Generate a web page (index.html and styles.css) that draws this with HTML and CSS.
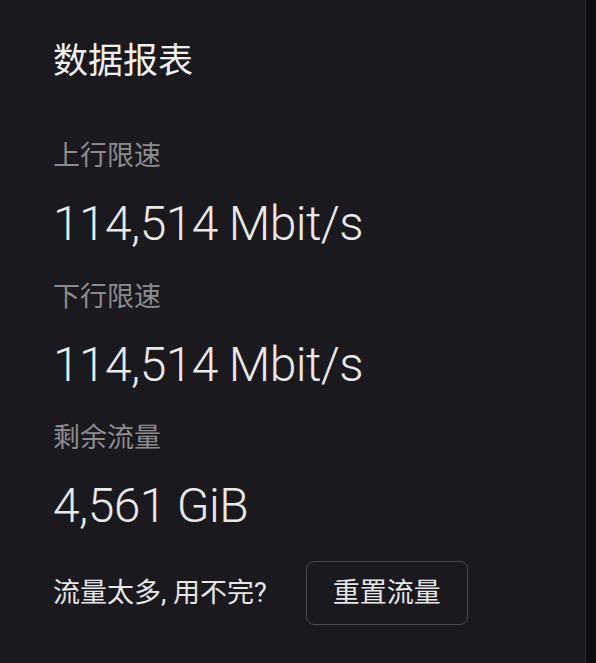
FILE: index.html
```html
<!DOCTYPE html>
<html lang="zh-CN">
<head>
<meta charset="utf-8">
<title>数据报表</title>
<link rel="stylesheet" href="styles.css">
</head>
<body>
  <section class="card">
    <h1 class="title">数据报表</h1>
    <div class="stat">
      <div class="label">上行限速</div>
      <div class="value">114,514 Mbit/s</div>
    </div>
    <div class="stat">
      <div class="label">下行限速</div>
      <div class="value">114,514 Mbit/s</div>
    </div>
    <div class="stat">
      <div class="label">剩余流量</div>
      <div class="value">4,561 GiB</div>
    </div>
    <div class="actions">
      <span class="hint">流量太多, 用不完?</span>
      <button class="btn" type="button">重置流量</button>
    </div>
  </section>
</body>
</html>
```
FILE: styles.css
```css
html, body {
  margin: 0;
  padding: 0;
  background: #0e0e11;
}
body {
  font-family: Roboto, "Noto Sans CJK SC", sans-serif;
  color: #e6e6e6;
}
.card {
  box-sizing: border-box;
  width: 586px;
  min-height: 663px;
  background: #1a191e;
  border-right: 1px solid #2e2d33;
  padding: 38px 0 0 53px;
}
.title {
  margin: 0;
  font-size: 35px;
  line-height: 48px;
  font-weight: 400;
  color: #f0f0f0;
}
.stat {
  display: flex;
  flex-direction: column;
  gap: 18px;
  margin-top: 23px;
}
.stat:first-of-type {
  margin-top: 50px;
}
.label {
  font-size: 27px;
  line-height: 40px;
  color: #8c8c8e;
}
.value {
  font-size: 48px;
  line-height: 60px;
  font-weight: 300;
  letter-spacing: -0.6px;
  color: #e8e8e8;
}
.actions {
  display: flex;
  align-items: center;
  gap: 39px;
  margin-top: 25px;
}
.hint {
  font-size: 27px;
  line-height: 40px;
  color: #e6e6e6;
}
.btn {
  font-family: Roboto, "Noto Sans CJK SC", sans-serif;
  font-size: 27px;
  line-height: 40px;
  color: #e6e6e6;
  background: transparent;
  border: 1px solid #4a494f;
  border-radius: 8px;
  padding: 11px 26px;
  cursor: pointer;
}
```
